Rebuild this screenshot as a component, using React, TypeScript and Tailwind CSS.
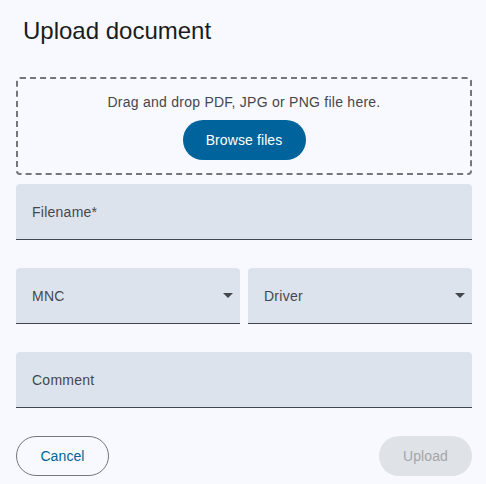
import React, { useState } from 'react'

const fieldBase = "h-14 w-full flex items-center px-4 pt-[2px] bg-[#dde3ec] rounded-t-[4px] border-b border-[#44474e] text-[14px] tracking-[0.25px] text-[#44474e]";

const SelectField = ({ label }: { label: string }) => (
    <div className={`${fieldBase} justify-between pr-[7px]`}>
        <span>{label}</span>
        <svg width="10" height="5" viewBox="0 0 10 5" className="shrink-0 -mt-[2px]">
            <path d="M0 0 L10 0 L5 5 Z" fill="#44474e" />
        </svg>
    </div>
)

const App = () => {
    const [filename] = useState('');

    return (
        <div className="w-[486px] h-[484px] bg-[#f7f9fe] pl-4 pr-[14px] pt-[15px] font-['Liberation_Sans',Arial,sans-serif]">
            <h2 className="ml-[7px] text-[24px] leading-[32px] text-[#1a1c1e]">Upload document</h2>

            <div className="mt-[30px] border-2 border-dashed border-[#747779] rounded-[4px] pt-[13px] pb-[13px] flex flex-col items-center">
                <p className="text-[14px] leading-[20px] tracking-[0.25px] text-[#44474e]">Drag and drop PDF, JPG or PNG file here.</p>
                <button className="mt-2 h-10 w-[123px] rounded-full bg-[#00639b] text-white text-[14px] tracking-[0.1px]">
                    Browse files
                </button>
            </div>

            <div className={`${fieldBase} mt-[9px]`}>
                {filename || 'Filename*'}
            </div>

            <div className="mt-7 flex gap-2">
                <SelectField label="MNC" />
                <SelectField label="Driver" />
            </div>

            <div className={`${fieldBase} mt-7`}>Comment</div>

            <div className="mt-7 flex justify-between">
                <button className="h-10 w-[93px] rounded-full border border-[#74777f] text-[#00639b] text-[14px] tracking-[0.1px]">
                    Cancel
                </button>
                <button disabled className="h-10 w-[93px] rounded-full bg-[#dfe2e6] text-[#a3a6ab] text-[14px] tracking-[0.1px]">
                    Upload
                </button>
            </div>
        </div>
    )
}

export default App
